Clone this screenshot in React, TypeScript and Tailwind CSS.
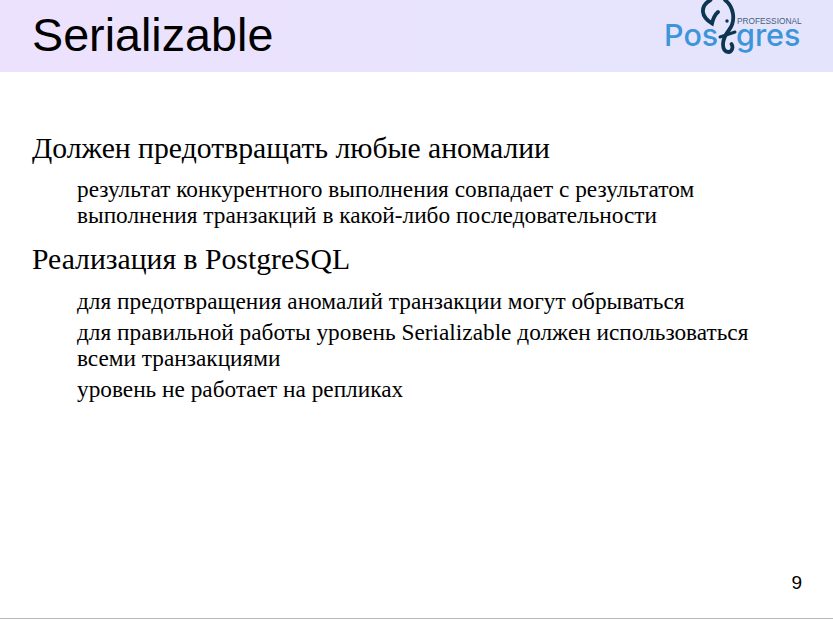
export default function App() {
  return (
    <div className="w-[833px] h-[623px] bg-white flex flex-col overflow-hidden">
      <header className="h-[72px] shrink-0 flex justify-between bg-gradient-to-r from-[#ede2fd] to-[#e4e4fd] pl-[32px] pr-[28px]">
        <h1 className="font-['Liberation_Sans',sans-serif] text-[46.7px] leading-[71px] text-black">Serializable</h1>
        <Logo />
      </header>

      <main className="flex-1 flex flex-col pt-[60px] pl-[32px] font-['Liberation_Serif',serif] text-black">
        <h2 className="text-[29.7px] leading-[33px]">Должен предотвращать любые аномалии</h2>
        <ul className="mt-[11px] pl-[45px] w-[740px] text-[23.3px] leading-[26px]">
          <li>результат конкурентного выполнения совпадает с результатом выполнения транзакций в какой-либо последовательности</li>
        </ul>
        <h2 className="mt-[15px] text-[29.7px] leading-[33px]">Реализация в PostgreSQL</h2>
        <ul className="mt-[12px] pl-[45px] w-[740px] flex flex-col gap-[5px] text-[23.3px] leading-[26px]">
          <li>для предотвращения аномалий транзакции могут обрываться</li>
          <li>для правильной работы уровень Serializable должен использоваться всеми транзакциями</li>
          <li>уровень не работает на репликах</li>
        </ul>
      </main>

      <footer className="shrink-0 flex justify-end pr-[31px] font-['Liberation_Sans',sans-serif] text-[19px] leading-[21px] text-black">9</footer>
      <div className="shrink-0 mt-[25px] mb-[4px] h-px bg-[#b8b8b8]" />
    </div>
  );
}

function Logo() {
  return (
    <div className="relative w-[140px] h-[72px] font-['Inter',sans-serif]">
      <span className="absolute left-[-1px] top-[25px] text-[30.5px] leading-[20px] font-medium text-[#3d95d9]">Pos</span>
      <span className="absolute left-[71px] top-[25px] text-[30.5px] leading-[20px] font-medium text-[#3d95d9]">gres</span>
      <span className="absolute left-[72px] top-[17px] font-['Liberation_Sans',sans-serif] text-[8.3px] leading-[8px] text-[#44607a]">PROFESSIONAL</span>
      <svg className="absolute left-[30px] top-0" width="46" height="58" viewBox="0 0 46 58" fill="none">
        <path d="M15.5 0C10 3 7.5 7 8 12C8.5 17 13 21 17 23.5C18 19 19.5 15 23 12" stroke="#0b3550" strokeWidth="3.8" strokeLinecap="round" />
        <path d="M30 0C34 3 37 8 38 14C39 21 37 26 34 30C31 34 28 38 28 44C28 49 30 52 33.5 52C37 52 38.5 47 36.5 44" stroke="#0b3550" strokeWidth="3.8" strokeLinecap="round" />
        <path d="M25 37L40 32" stroke="#0b3550" strokeWidth="3" strokeLinecap="round" />
        <circle cx="32" cy="21" r="1.7" fill="#0b3550" />
      </svg>
    </div>
  );
}
